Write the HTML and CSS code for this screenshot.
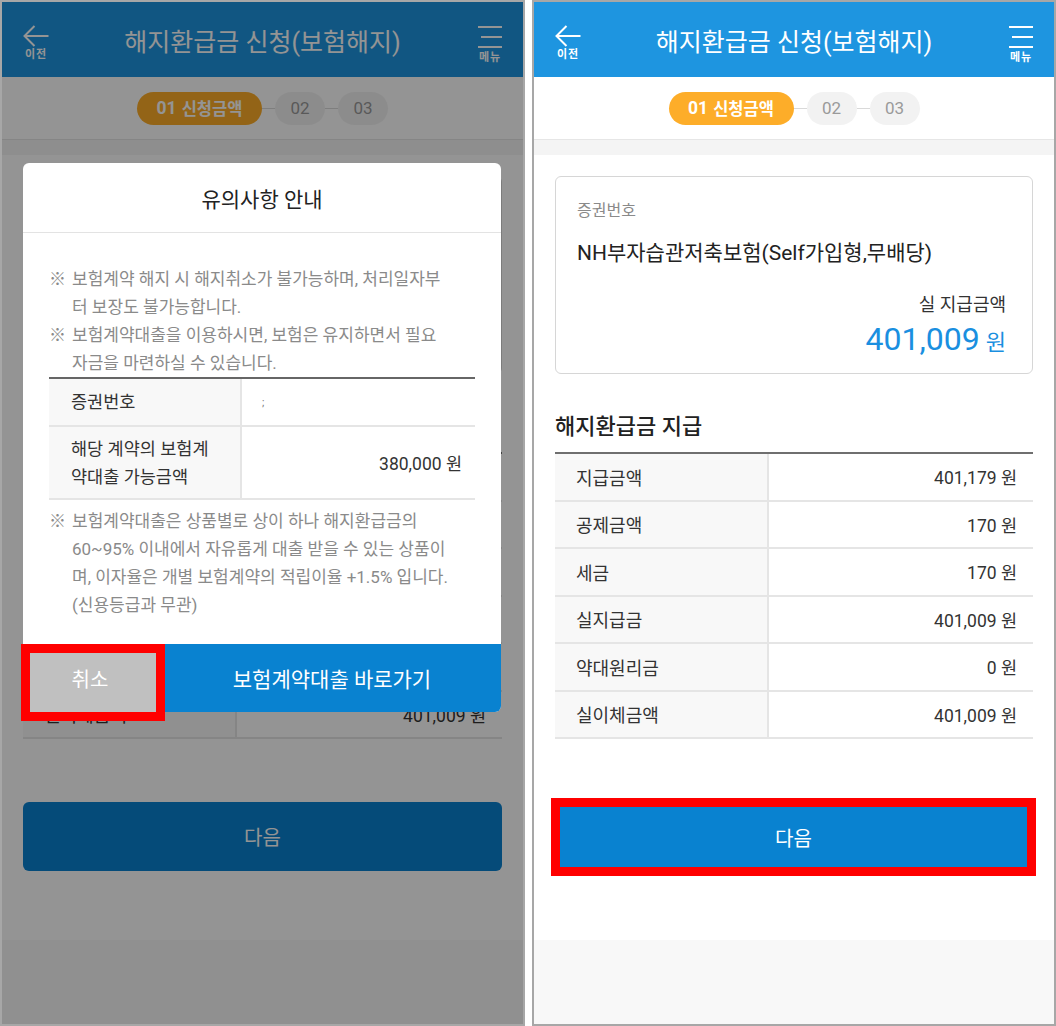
FILE: index.html
```html
<!DOCTYPE html>
<html lang="ko">
<head>
<meta charset="utf-8">
<title>해지환급금 신청(보험해지)</title>
<link rel="stylesheet" href="styles.css">
</head>
<body>
<div class="screens">

  <section class="phone phone-left">
    <header class="appbar">
      <div class="nav-btn">
        <svg width="26" height="22" viewBox="0 0 26 22"><path d="M11.5 1 L1.5 11 L11.5 21 M1.5 11 H25.5" fill="none" stroke="#fff" stroke-width="2"/></svg>
        <span class="nav-label">이전</span>
      </div>
      <h1 class="title">해지환급금 신청(보험해지)</h1>
      <div class="nav-btn nav-menu">
        <svg width="24" height="24" viewBox="0 0 24 24"><path d="M0 2 H24 M3 12 H24 M0 22 H24" fill="none" stroke="#fff" stroke-width="2"/></svg>
        <span class="nav-label nav-label-menu">메뉴</span>
      </div>
    </header>
    <nav class="steps">
      <span class="step step-active"><b class="step-num">01</b>신청금액</span>
      <span class="step-line"></span>
      <span class="step step-idle">02</span>
      <span class="step-line"></span>
      <span class="step step-idle">03</span>
    </nav>
    <div class="band"></div>
    <main class="content content-left">
      <div class="card">
        <p class="card-label">증권번호</p>
        <p class="card-name">NH부자습관저축보험(Self가입형,무배당)</p>
        <p class="card-sub">실 지급금액</p>
        <p class="card-amount"><span class="amount-num">401,009</span><span class="amount-unit">원</span></p>
      </div>
      <h2 class="section-title">해지환급금 지급</h2>
      <div class="table">
        <div class="row"><span class="row-label">지급금액</span><span class="row-value">401,179 원</span></div>
        <div class="row"><span class="row-label">공제금액</span><span class="row-value">170 원</span></div>
        <div class="row"><span class="row-label">세금</span><span class="row-value">170 원</span></div>
        <div class="row"><span class="row-label">실지급금</span><span class="row-value">401,009 원</span></div>
        <div class="row"><span class="row-label">약대원리금</span><span class="row-value">0 원</span></div>
        <div class="row"><span class="row-label">실이체금액</span><span class="row-value">401,009 원</span></div>
      </div>
      <button class="btn-next btn-next-round" type="button">다음</button>
    </main>
    <div class="footer-band"></div>

    <div class="overlay"></div>
    <div class="modal">
      <div class="modal-head">유의사항 안내</div>
      <div class="modal-body">
        <p class="note"><span class="note-mark">※</span><span>보험계약 해지 시 해지취소가 불가능하며, 처리일자부<br>터 보장도 불가능합니다.</span></p>
        <p class="note"><span class="note-mark">※</span><span>보험계약대출을 이용하시면, 보험은 유지하면서 필요<br>자금을 마련하실 수 있습니다.</span></p>
        <div class="mtable">
          <div class="mrow"><span class="mrow-label">증권번호</span><span class="mrow-value mrow-value-start"><span class="masked">;</span></span></div>
          <div class="mrow"><span class="mrow-label mrow-label-two">해당 계약의 보험계<br>약대출 가능금액</span><span class="mrow-value">380,000 원</span></div>
        </div>
        <p class="note note-after"><span class="note-mark">※</span><span>보험계약대출은 상품별로 상이 하나 해지환급금의<br>60~95% 이내에서 자유롭게 대출 받을 수 있는 상품이<br>며, 이자율은 개별 보험계약의 적립이율 +1.5% 입니다.<br>(신용등급과 무관)</span></p>
      </div>
      <div class="modal-actions">
        <button class="btn-cancel" type="button">취소</button>
        <button class="btn-loan" type="button">보험계약대출 바로가기</button>
      </div>
      <div class="highlight highlight-cancel"></div>
    </div>
  </section>

  <section class="phone phone-right">
    <header class="appbar">
      <div class="nav-btn">
        <svg width="26" height="22" viewBox="0 0 26 22"><path d="M11.5 1 L1.5 11 L11.5 21 M1.5 11 H25.5" fill="none" stroke="#fff" stroke-width="2"/></svg>
        <span class="nav-label">이전</span>
      </div>
      <h1 class="title">해지환급금 신청(보험해지)</h1>
      <div class="nav-btn nav-menu">
        <svg width="24" height="24" viewBox="0 0 24 24"><path d="M0 2 H24 M3 12 H24 M0 22 H24" fill="none" stroke="#fff" stroke-width="2"/></svg>
        <span class="nav-label nav-label-menu">메뉴</span>
      </div>
    </header>
    <nav class="steps">
      <span class="step step-active"><b class="step-num">01</b>신청금액</span>
      <span class="step-line"></span>
      <span class="step step-idle">02</span>
      <span class="step-line"></span>
      <span class="step step-idle">03</span>
    </nav>
    <div class="band"></div>
    <main class="content content-right">
      <div class="card">
        <p class="card-label">증권번호</p>
        <p class="card-name">NH부자습관저축보험(Self가입형,무배당)</p>
        <p class="card-sub">실 지급금액</p>
        <p class="card-amount"><span class="amount-num">401,009</span><span class="amount-unit">원</span></p>
      </div>
      <h2 class="section-title">해지환급금 지급</h2>
      <div class="table">
        <div class="row"><span class="row-label">지급금액</span><span class="row-value">401,179 원</span></div>
        <div class="row"><span class="row-label">공제금액</span><span class="row-value">170 원</span></div>
        <div class="row"><span class="row-label">세금</span><span class="row-value">170 원</span></div>
        <div class="row"><span class="row-label">실지급금</span><span class="row-value">401,009 원</span></div>
        <div class="row"><span class="row-label">약대원리금</span><span class="row-value">0 원</span></div>
        <div class="row"><span class="row-label">실이체금액</span><span class="row-value">401,009 원</span></div>
      </div>
      <div class="btn-frame">
        <button class="btn-next" type="button">다음</button>
      </div>
    </main>
    <div class="footer-band"></div>
  </section>

</div>
</body>
</html>
```
FILE: styles.css
```css
* { box-sizing: border-box; margin: 0; padding: 0; }
html, body { background: #fff; }
body {
  width: 1056px;
  height: 1026px;
  overflow: hidden;
  font-family: Roboto, "Noto Sans CJK KR", sans-serif;
  color: #333;
}
button { font-family: inherit; border: 0; cursor: pointer; }

.screens { display: flex; gap: 7px; height: 1026px; }

.phone {
  position: relative;
  display: flex;
  flex-direction: column;
  height: 1026px;
  border: 2px solid #a7a7a7;
  background: #fff;
  overflow: hidden;
  flex: none;
}
.phone-left { width: 525px; }
.phone-right { width: 524px; }

/* app bar */
.appbar {
  flex: none;
  height: 75px;
  background: #1e95e0;
  color: #fff;
  display: grid;
  grid-template-columns: 1fr auto 1fr;
  padding: 0 21px;
}
.nav-btn {
  display: flex;
  flex-direction: column;
  align-items: center;
  width: 26px;
  padding-top: 23px;
}
.nav-btn svg { display: block; }
.nav-menu { justify-self: end; width: 24px; }
.nav-label {
  font-size: 11px;
  font-weight: 700;
  line-height: 13px;
  margin-top: 1px;
  letter-spacing: 1px;
  white-space: nowrap;
}
.nav-label-menu { margin-top: 2px; }
.title {
  font-size: 25px;
  font-weight: 400;
  line-height: 75px;
  padding-top: 3px;
  white-space: nowrap;
}

/* steps */
.steps {
  flex: none;
  height: 63px;
  border-bottom: 1px solid #e6e6e6;
  display: flex;
  align-items: center;
  justify-content: center;
}
.step {
  height: 33px;
  border-radius: 17px;
  display: flex;
  align-items: center;
  justify-content: center;
  white-space: nowrap;
}
.step-active {
  width: 125px;
  background: #fdad29;
  color: #fff;
  font-size: 16.5px;
  font-weight: 700;
}
.step-num { font-size: 17.5px; font-weight: 700; margin-right: 5px; }
.step-idle {
  width: 50px;
  background: #f2f2f2;
  color: #9a9a9a;
  font-size: 17px;
}
.step-line { width: 13px; height: 1px; background: #d9d9d9; }

.band { flex: none; height: 15px; background: #f4f4f4; }

/* content */
.content { flex: none; background: #fff; padding: 21px 21px 64px; }
.content-left { padding-bottom: 69px; }

.card {
  height: 198px;
  border: 1px solid #d6d6d6;
  border-radius: 6px;
  padding: 23px 26px 14px 21px;
}
.card-label { font-size: 16px; line-height: 22px; color: #8a8a8a; }
.card-name { font-size: 21px; line-height: 26px; color: #222; margin-top: 18px; white-space: nowrap; }
.card-sub { font-size: 18px; line-height: 24px; color: #333; margin-top: 27px; text-align: right; }
.card-amount { text-align: right; color: #1a8fe0; line-height: 40px; margin-top: 2px; }
.amount-num { font-size: 32px; }
.amount-unit { font-size: 22px; margin-left: 6px; }

.section-title {
  font-size: 22px;
  line-height: 30px;
  font-weight: 500;
  color: #222;
  margin-top: 38px;
  margin-bottom: 10px;
}

.table { border-top: 2px solid #6f6f6f; }
.row {
  display: grid;
  grid-template-columns: 214px 1fr;
  height: 47.5px;
  border-bottom: 2px solid #e5e5e5;
}
.row-label {
  display: flex;
  align-items: center;
  padding-left: 21px;
  background: #f8f8f8;
  border-right: 2px solid #e5e5e5;
  font-size: 18px;
  color: #333;
}
.row-value {
  display: flex;
  align-items: center;
  justify-content: flex-end;
  padding-right: 16px;
  font-size: 17.5px;
  color: #333;
}

.btn-next {
  display: flex;
  align-items: center;
  justify-content: center;
  width: 100%;
  height: 60px;
  background: #0982d0;
  color: #fff;
  font-size: 20px;
}
.btn-next-round { height: 69px; margin-top: 63px; border-radius: 6px; }
.btn-frame { margin: 59px -3px 0 -4px; border: 9px solid #ff0000; }

.footer-band { flex: 1; background: #f8f8f8; }

/* overlay + modal */
.overlay { position: absolute; inset: 0; background: rgba(0, 0, 0, 0.42); }
.modal {
  position: absolute;
  top: 161px;
  left: 21px;
  width: 478px;
  background: #fff;
  border-radius: 6px;
}
.modal-head {
  height: 70px;
  border-bottom: 1px solid #e3e3e3;
  display: flex;
  align-items: center;
  justify-content: center;
  font-size: 21px;
  color: #222;
}
.modal-body { padding: 32px 26px 25px; }
.note {
  display: flex;
  font-size: 17px;
  line-height: 28px;
  color: #8a8a8a;
  white-space: nowrap;
}
.note-mark { flex: none; width: 23px; }
.note-after { margin-top: 7px; }

.mtable { border-top: 2px solid #666; }
.mrow {
  display: grid;
  grid-template-columns: 193px 1fr;
  border-bottom: 2px solid #e5e5e5;
}
.mrow-label {
  background: #f8f8f8;
  border-right: 2px solid #e5e5e5;
  padding: 9px 8px 9px 22px;
  font-size: 17.5px;
  line-height: 28px;
  color: #333;
  white-space: nowrap;
}
.mrow-label-two { padding-top: 7.5px; padding-bottom: 7.5px; }
.mrow-value {
  display: flex;
  align-items: center;
  justify-content: flex-end;
  padding-right: 13px;
  font-size: 17.5px;
  color: #333;
}
.mrow-value-start { justify-content: flex-start; padding-left: 20px; }
.masked { font-size: 11px; color: #777; }

.modal-actions { display: flex; height: 68px; }
.btn-cancel {
  flex: none;
  width: 140px;
  padding-right: 6px;
  background: #c0c0c0;
  color: #fff;
  font-size: 20px;
}
.btn-loan {
  flex: 1;
  background: #0982d0;
  color: #fff;
  font-size: 21px;
  border-bottom-right-radius: 6px;
}
.highlight { position: absolute; border: 9px solid #ff0000; }
.highlight-cancel { left: -2px; top: 481px; width: 144px; height: 77px; }
```
